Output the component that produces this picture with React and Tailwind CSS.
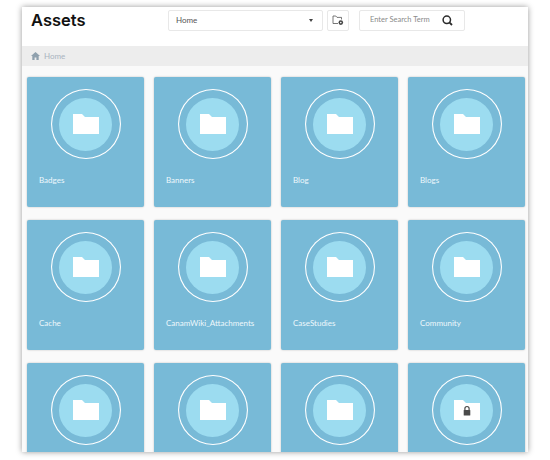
import React from 'react';

const folders = [
  { name: 'Badges' },
  { name: 'Banners' },
  { name: 'Blog' },
  { name: 'Blogs' },
  { name: 'Cache' },
  { name: 'CanamWiki_Attachments' },
  { name: 'CaseStudies' },
  { name: 'Community' },
  { name: '' },
  { name: '' },
  { name: '' },
  { name: '', locked: true },
];

const FolderIcon = ({ locked }) => (
  <svg width="26" height="20" viewBox="0 0 26 20" className="block">
    <path d="M0 0H9L12 3H26V20H0Z" fill="#fff" />
    {locked && (
      <g fill="#4a4a4a">
        <path d="M10.3 10V8.6a2.7 2.7 0 0 1 5.4 0V10h-1.2V8.6a1.5 1.5 0 0 0-3 0V10Z" />
        <rect x="9.7" y="10" width="6.6" height="5.6" rx="0.6" />
      </g>
    )}
  </svg>
);

const FolderCard = ({ name, locked }) => (
  <div className="relative h-[130px] rounded-[2px] bg-[#78bad7] pt-3 shadow-[0_0_2px_rgba(0,0,0,0.25)]">
    <div className="mx-auto flex h-[70px] w-[70px] items-center justify-center rounded-full shadow-[inset_0_0_0_1.1px_#fff]">
      <div className="flex h-[53px] w-[53px] items-center justify-center rounded-full bg-[#9cdcf0]">
        <FolderIcon locked={locked} />
      </div>
    </div>
    <div className="mt-[15px] pl-3 text-[8px] leading-[12px] text-[#eef8fc]">{name}</div>
  </div>
);

export default function App() {
  return (
    <div className="h-[460px] w-[550px] overflow-hidden bg-white pl-[22px] pt-[7px] font-['Lato',sans-serif]">
      <div className="flex h-[445px] w-[506px] flex-col overflow-hidden bg-[#fafafa] shadow-[0_0_6px_rgba(0,0,0,0.4)]">
        <div className="flex h-[39px] shrink-0 items-start bg-white">
          <h1 className="ml-[9px] w-[137px] pt-[2px] text-[16.5px] font-semibold leading-[22px] text-[#111] font-['Inter',sans-serif]">
            Assets
          </h1>
          <div className="mt-[2.5px] flex h-[21px] w-[155px] items-center justify-between rounded-[2px] border border-[#e8e8e8] bg-white pl-[7px] pr-[9px] text-[8px] text-[#555]">
            <span>Home</span>
            <span className="h-0 w-0 border-x-[2.5px] border-t-[3px] border-x-transparent border-t-[#444]" />
          </div>
          <div className="ml-[4px] mt-[2.5px] flex h-[21px] w-[22px] items-center justify-center rounded-[2px] border border-[#e8e8e8] bg-white">
            <svg width="12" height="11" viewBox="0 0 12 11" fill="none">
              <path d="M6 8.5H1V1H3.8L5 2.4H9.5V4.5" stroke="#555" strokeWidth="0.8" />
              <circle cx="8.8" cy="7.6" r="2.3" fill="#444" />
              <circle cx="8.8" cy="7.6" r="0.8" fill="#fff" />
            </svg>
          </div>
          <div className="ml-[10px] mt-[2.5px] flex h-[21px] w-[106px] items-center rounded-[2px] border border-[#e8e8e8] bg-white pl-[10px] text-[7.5px] text-[#8a8a8a]">
            <span className="w-[72px]">Enter Search Term</span>
            <svg width="11" height="11" viewBox="0 0 11 11" fill="none">
              <circle cx="4.8" cy="4.8" r="3.7" stroke="#2b2b2b" strokeWidth="1.5" />
              <path d="M7.6 7.6L10 10" stroke="#2b2b2b" strokeWidth="1.8" />
            </svg>
          </div>
        </div>
        <div className="flex h-[20px] shrink-0 items-center gap-[4px] bg-[#ededed] pl-[9px] text-[8px] text-[#a9b4bf]">
          <svg width="9" height="8" viewBox="0 0 9 8" fill="#8fa0ad">
            <path d="M4.5 0L9 4H7.7V8H5.4V5.4H3.6V8H1.3V4H0Z" />
          </svg>
          <span>Home</span>
        </div>
        <div className="grid grid-cols-[repeat(4,117px)] gap-x-[10px] gap-y-[13px] pl-[5px] pt-[11px]">
          {folders.map((f, i) => (
            <FolderCard key={i} name={f.name} locked={f.locked} />
          ))}
        </div>
      </div>
    </div>
  );
}
